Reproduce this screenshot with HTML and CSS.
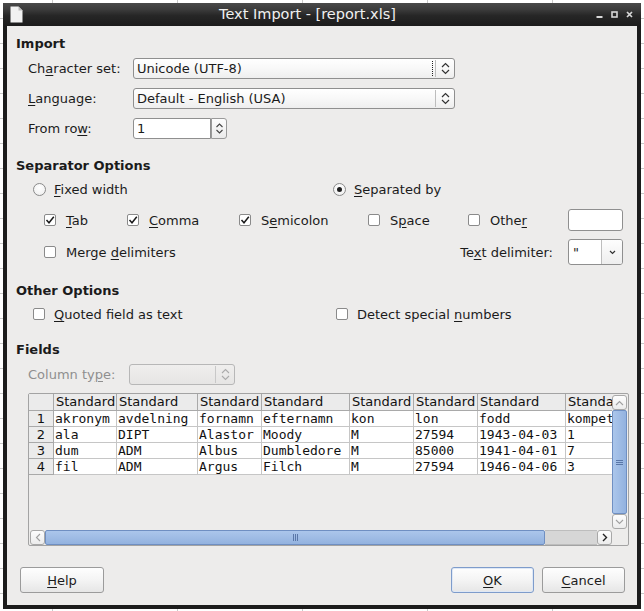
FILE: index.html
```html
<!DOCTYPE html>
<html>
<head>
<meta charset="utf-8">
<title>Text Import</title>
<link rel="stylesheet" href="styles.css">
</head>
<body>
<div class="window">
  <div class="titlebar">
    <svg class="appicon" viewBox="0 0 13 17"><path d="M0.5 0.5H8.5L12.5 4.5V16.5H0.5Z" fill="#f2f2f2"/><path d="M8.5 0.5V4.5H12.5Z" fill="#b9b9b9"/></svg>
    <div class="title">Text Import - [report.xls]</div>
    <div class="controls">
      <svg class="ctl" viewBox="0 0 7 7"><rect x="0.5" y="5" width="6" height="2" fill="#d8d8d8"/></svg>
      <svg class="ctl" viewBox="0 0 7 7"><rect x="1" y="1" width="5" height="5" fill="none" stroke="#d8d8d8" stroke-width="1.6"/></svg>
      <svg class="ctl" viewBox="0 0 7 7"><path d="M1 1L6 6M6 1L1 6" stroke="#d8d8d8" stroke-width="1.7"/></svg>
    </div>
  </div>
  <div class="body">
    <div class="heading h-import">Import</div>
    <div class="row">
      <span class="lbl">Ch<u>a</u>racter set:</span>
      <div class="combo wide"><span class="val">Unicode (UTF-8)</span><span class="focusline"></span><span class="cbtn"><svg class="updown" viewBox="0 0 9 13"><path d="M1 5L4.5 1.5L8 5M1 8L4.5 11.5L8 8" fill="none" stroke="#333" stroke-width="1.2"/></svg></span></div>
    </div>
    <div class="row">
      <span class="lbl"><u>L</u>anguage:</span>
      <div class="combo wide"><span class="val">Default - English (USA)</span><span class="cbtn"><svg class="updown" viewBox="0 0 9 13"><path d="M1 5L4.5 1.5L8 5M1 8L4.5 11.5L8 8" fill="none" stroke="#333" stroke-width="1.2"/></svg></span></div>
    </div>
    <div class="row">
      <span class="lbl">From ro<u>w</u>:</span>
      <div class="spin"><span class="field">1</span><span class="spinbtn"><svg class="updown" viewBox="0 0 9 13"><path d="M1.5 5L4.5 2L7.5 5M1.5 8L4.5 11L7.5 8" fill="none" stroke="#444" stroke-width="1.1"/></svg></span></div>
    </div>

    <div class="heading h-sep">Separator Options</div>
    <div class="optrow radiorow">
      <div class="opt"><span class="radio"></span><span><u>F</u>ixed width</span></div>
      <div class="opt"><span class="radio on"></span><span><u>S</u>eparated by</span></div>
    </div>
    <div class="optrow checkrow">
      <div class="opt w-tab"><span class="cb"><svg class="tick" viewBox="0 0 10 10"><path d="M1.5 5L4 7.8L8.8 1.8" fill="none" stroke="#1a1a1a" stroke-width="1.5"/></svg></span><span><u>T</u>ab</span></div>
      <div class="opt w-comma"><span class="cb"><svg class="tick" viewBox="0 0 10 10"><path d="M1.5 5L4 7.8L8.8 1.8" fill="none" stroke="#1a1a1a" stroke-width="1.5"/></svg></span><span><u>C</u>omma</span></div>
      <div class="opt w-semi"><span class="cb"><svg class="tick" viewBox="0 0 10 10"><path d="M1.5 5L4 7.8L8.8 1.8" fill="none" stroke="#1a1a1a" stroke-width="1.5"/></svg></span><span>S<u>e</u>micolon</span></div>
      <div class="opt w-space"><span class="cb"></span><span>S<u>p</u>ace</span></div>
      <div class="opt w-other"><span class="cb"></span><span>Othe<u>r</u></span></div>
      <div class="textbox"></div>
    </div>
    <div class="optrow mergerow">
      <div class="opt"><span class="cb"></span><span>Merge <u>d</u>elimiters</span></div>
      <span class="tdlabel">Te<u>x</u>t delimiter:</span>
      <div class="combo small"><span class="val">"</span><span class="cbtn dd"><svg class="down" viewBox="0 0 7 5"><path d="M1 1L3.5 3.5L6 1" fill="none" stroke="#333" stroke-width="1.2"/></svg></span></div>
    </div>

    <div class="heading h-other">Other Options</div>
    <div class="optrow quotedrow">
      <div class="opt w-quoted"><span class="cb"></span><span><u>Q</u>uoted field as text</span></div>
      <div class="opt"><span class="cb"></span><span>Detect special <u>n</u>umbers</span></div>
    </div>

    <div class="heading h-fields">Fields</div>
    <div class="row typerow">
      <span class="lbl dis">Column ty<u>p</u>e:</span>
      <div class="combo disabled"><span class="val"></span><span class="cbtn"><svg class="updown" viewBox="0 0 9 13"><path d="M1 5L4.5 1.5L8 5M1 8L4.5 11.5L8 8" fill="none" stroke="#aaa" stroke-width="1.1"/></svg></span></div>
    </div>

    <div class="table">
      <div class="grid">
        <div class="c n"></div><div class="c h">Standard</div><div class="c h">Standard</div><div class="c h">Standard</div><div class="c h">Standard</div><div class="c h">Standard</div><div class="c h">Standard</div><div class="c h">Standard</div><div class="c h">Standard</div>
        <div class="c n">1</div><div class="c">akronym</div><div class="c">avdelning</div><div class="c">fornamn</div><div class="c">efternamn</div><div class="c">kon</div><div class="c">lon</div><div class="c">fodd</div><div class="c">kompetens</div>
        <div class="c n">2</div><div class="c">ala</div><div class="c">DIPT</div><div class="c">Alastor</div><div class="c">Moody</div><div class="c">M</div><div class="c">27594</div><div class="c">1943-04-03</div><div class="c">1</div>
        <div class="c n">3</div><div class="c">dum</div><div class="c">ADM</div><div class="c">Albus</div><div class="c">Dumbledore</div><div class="c">M</div><div class="c">85000</div><div class="c">1941-04-01</div><div class="c">7</div>
        <div class="c n">4</div><div class="c">fil</div><div class="c">ADM</div><div class="c">Argus</div><div class="c">Filch</div><div class="c">M</div><div class="c">27594</div><div class="c">1946-04-06</div><div class="c">3</div>
      </div>
      <div class="vscroll">
        <div class="sbtn"><svg class="chev" viewBox="0 0 9 6"><path d="M1 5L4.5 1.5L8 5" fill="none" stroke="#a0a0a0" stroke-width="1.1"/></svg></div>
        <div class="vthumb"><svg class="grip" viewBox="0 0 7 7"><path d="M0 1.5H7M0 3.5H7M0 5.5H7" stroke="#5a77a8" stroke-width="1"/></svg></div>
        <div class="sbtn"><svg class="chev" viewBox="0 0 9 6"><path d="M1 1L4.5 4.5L8 1" fill="none" stroke="#a0a0a0" stroke-width="1.1"/></svg></div>
      </div>
      <div class="hscroll">
        <div class="sbtn hbtn"><svg class="hchev" viewBox="0 0 6 9"><path d="M5 1L1.5 4.5L5 8" fill="none" stroke="#a0a0a0" stroke-width="1.1"/></svg></div>
        <div class="hthumb"><svg class="hgrip" viewBox="0 0 7 7"><path d="M1.5 0V7M3.5 0V7M5.5 0V7" stroke="#5a77a8" stroke-width="1"/></svg></div>
        <div class="htrack"></div>
        <div class="sbtn hbtn"><svg class="hchev" viewBox="0 0 6 9"><path d="M1 1L4.5 4.5L1 8" fill="none" stroke="#222" stroke-width="1.4"/></svg></div>
      </div>
      <div class="corner"></div>
    </div>

    <div class="buttons">
      <div class="btn help"><u>H</u>elp</div>
      <div class="btn ok"><u>O</u>K</div>
      <div class="btn cancel"><u>C</u>ancel</div>
    </div>
  </div>
</div>
</body>
</html>
```
FILE: styles.css
```css
* { box-sizing: border-box; }
html, body { margin: 0; }
body {
  width: 644px;
  height: 611px;
  overflow: hidden;
  padding: 3px 0 0 3px;
  background-color: #fff;
  background-image: linear-gradient(to right, #c9c9c9 1px, transparent 1px), linear-gradient(to bottom, #c9c9c9 1px, transparent 1px);
  background-size: 125px 25px;
  background-position: 52px 18px;
  font-family: "DejaVu Sans", "Liberation Sans", sans-serif;
  font-size: 13px;
  color: #1b1b1b;
}
u { text-underline-offset: 2px; }
.window { width: 638px; height: 606px; display: flex; flex-direction: column; }
.titlebar {
  height: 23px; flex: none; display: flex; align-items: center;
  background: linear-gradient(#4a4a4a 0, #3a3a3a 30%, #262626 55%, #1c1c1c 100%);
  color: #f0f0f0;
}
.appicon { margin-left: 7px; width: 13px; height: 17px; flex: none; }
.title { flex: 1; text-align: center; font-size: 14.5px; line-height: 23px; padding-right: 4px; }
.controls { display: flex; gap: 8px; margin-right: 8px; align-items: center; }
.ctl { width: 7px; height: 7px; display: block; }

.body {
  flex: 1; display: flex; flex-direction: column;
  background: #edeceb;
  border: 4px solid #1c1c1c; border-top: 0;
}
.heading { font-weight: bold; height: 19px; line-height: 19px; padding-left: 9px; }
.h-import { margin-top: 8px; }
.h-sep, .h-other { margin-top: 13px; }
.h-fields { margin-top: 12px; }

.row { display: flex; align-items: center; height: 30px; padding-left: 21px; }
.lbl { width: 105px; }
.lbl.dis { width: 101px; color: #8f8f8f; }

.combo {
  position: relative; display: flex; align-items: center; height: 21px;
  border: 1px solid #8f8f8f; border-radius: 3px;
  background: linear-gradient(#ffffff, #f8f8f8 50%, #eeeeee);
}
.combo.wide { width: 322px; }
.combo .val { flex: 1; padding-left: 3px; white-space: nowrap; line-height: 19px; }
.combo .cbtn {
  width: 19px; height: 17px; border-left: 1px solid #bdbdbd;
  display: flex; align-items: center; justify-content: center;
}
.focusline { position: absolute; right: 21px; top: 2px; height: 15px; border-left: 1px dotted #222; }
.updown { width: 9px; height: 13px; display: block; }

.spin { display: flex; height: 21px; }
.spin .field {
  width: 78px; border: 1px solid #8f8f8f; border-radius: 3px 0 0 3px;
  background: #fff; padding-left: 3px; line-height: 19px;
}
.spinbtn {
  width: 16px; border: 1px solid #9a9a9a; border-radius: 0 3px 3px 0; margin-left: 0;
  background: linear-gradient(#fdfdfd, #ebebeb);
  display: flex; align-items: center; justify-content: center;
}

.optrow { display: flex; align-items: center; }
.opt { display: flex; align-items: center; gap: 10px; white-space: nowrap; }
.radiorow { height: 29px; padding-left: 26px; }
.radiorow .opt { gap: 8px; }
.radiorow .opt:first-child { width: 300px; }
.radio {
  width: 13px; height: 13px; border-radius: 50%; border: 1px solid #8a8a8a;
  background: radial-gradient(circle at 50% 35%, #ffffff, #ececec);
  display: flex; align-items: center; justify-content: center;
}
.radio.on::after { content: ""; width: 5px; height: 5px; border-radius: 50%; background: #1e1e1e; }

.checkrow { height: 32px; padding-left: 37px; }
.w-tab { width: 83px; }
.w-comma { width: 112px; }
.w-semi { width: 129px; }
.w-space { width: 100px; }
.w-other { width: 100px; }
.cb {
  width: 12px; height: 12px; border: 1px solid #8a8a8a; border-radius: 2px; background: #fff;
  display: flex; align-items: center; justify-content: center; flex: none;
}
.tick { width: 10px; height: 10px; display: block; }
.textbox { width: 55px; height: 22px; border: 1px solid #8f8f8f; border-radius: 3px; background: #fff; }

.mergerow { height: 32px; padding-left: 37px; padding-right: 14px; }
.tdlabel { margin-left: auto; margin-right: 15px; }
.combo.small { width: 55px; height: 26px; background: #fff; }
.combo.small .val { padding-left: 4px; }
.combo.small .cbtn.dd { width: 21px; height: 24px; background: linear-gradient(#fdfdfd, #eeeeee); border-radius: 0 2px 2px 0; }
.down { width: 7px; height: 5px; display: block; }

.quotedrow { height: 28px; padding-left: 26px; }
.quotedrow .opt { gap: 9px; }
.w-quoted { width: 303px; }

.typerow { height: 25px; margin-top: 3px; }
.combo.disabled { width: 106px; border-color: #b7b7b7; background: linear-gradient(#efeeed, #e6e5e4); }
.combo.disabled .cbtn { border-left-color: #c8c8c8; }

.table {
  margin: 6px 0 0 21px; width: 601px; height: 153px;
  border: 1px solid #a3a3a3; border-radius: 2px;
  display: grid; grid-template-columns: 583px 16px; grid-template-rows: 135px 16px;
  background: #edeceb;
}
.grid {
  overflow: hidden; display: grid;
  grid-template-columns: 25px 63px 81px 64px 88px 64px 64px 88px 60px;
  grid-template-rows: 17px; grid-auto-rows: 16px; align-content: start;
}
.c {
  border-right: 1px solid #c6c6c6; border-bottom: 1px solid #c6c6c6; background: #fff;
  font-family: "DejaVu Sans Mono", "Liberation Mono", monospace; font-size: 13px;
  padding-left: 1px; line-height: 15px; white-space: nowrap; overflow: hidden; color: #111;
}
.c.h {
  background: #ebebeb; font-family: "DejaVu Sans", sans-serif; padding-left: 2px;
  border-color: #a9a9a9; line-height: 16px;
}
.c.n { background: #ebebeb; text-align: center; font-family: "DejaVu Sans", sans-serif; border-color: #a9a9a9; padding-left: 0; }

.vscroll { display: flex; flex-direction: column; padding: 1px 1px 0 0; }
.sbtn {
  height: 15px; border: 1px solid #a8a8a8; border-radius: 3px;
  background: linear-gradient(#fdfdfd, #ececec);
  display: flex; align-items: center; justify-content: center; flex: none;
}
.chev { width: 9px; height: 6px; display: block; }
.vthumb {
  flex: 1; border: 1px solid #6f8fc2; border-radius: 2px;
  background: linear-gradient(to right, #abc6eb, #93b2df);
  display: flex; align-items: center; justify-content: center;
}
.grip { width: 7px; height: 7px; display: block; }
.hscroll { display: flex; padding: 1px 0 0 1px; }
.hbtn { width: 15px; height: 15px; }
.hchev { width: 6px; height: 9px; display: block; }
.hthumb {
  width: 500px; height: 15px; border: 1px solid #6f8fc2; border-radius: 2px;
  background: linear-gradient(#abc6eb, #93b2df);
  display: flex; align-items: center; justify-content: center;
}
.hgrip { width: 7px; height: 7px; display: block; }
.htrack { flex: 1; height: 15px; background: #d6d6d6; border-top: 1px solid #bdbdbd; border-bottom: 1px solid #bdbdbd; }

.buttons { margin-top: auto; display: flex; padding: 0 12px 12px 13px; }
.btn {
  height: 26px; border: 1px solid #9b9b9b; border-radius: 3px;
  background: linear-gradient(#fefefe, #f4f4f4 50%, #e6e6e6);
  display: flex; align-items: center; justify-content: center;
}
.help { width: 84px; }
.ok { width: 83px; margin-left: auto; border-color: #7e9ccb; box-shadow: inset 0 0 0 1px #dfe8f5; }
.cancel { width: 83px; margin-left: 8px; }
```
